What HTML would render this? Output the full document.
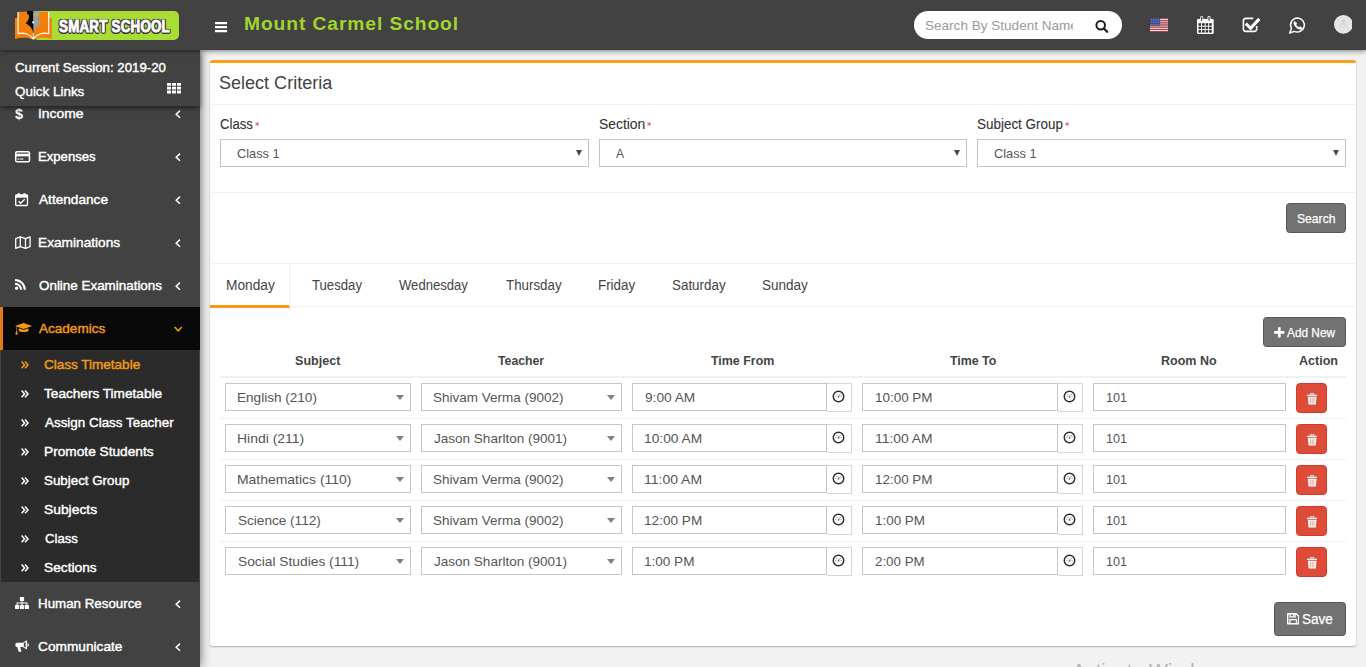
<!DOCTYPE html>
<html lang="en">
<head>
<meta charset="utf-8">
<title>Smart School : Class Timetable</title>
<style>
*{box-sizing:border-box;margin:0;padding:0}
html,body{width:1366px;height:667px;overflow:hidden}
body{font-family:"Liberation Sans",sans-serif;background:#f2f2f2;color:#444;font-size:13px;position:relative}
.a{position:absolute}
.t{position:absolute;white-space:nowrap;line-height:1.2;transform-origin:0 50%;display:block}
.lg{-webkit-text-stroke:.9px #fff;text-shadow:1.3px 0 0 #3d3d3d,-1.3px 0 0 #3d3d3d,0 1.3px 0 #3d3d3d,0 -1.3px 0 #3d3d3d,1px 1px 0 #3d3d3d,-1px -1px 0 #3d3d3d,1px -1px 0 #3d3d3d,-1px 1px 0 #3d3d3d,1.5px .6px 0 #3d3d3d,-1.5px .6px 0 #3d3d3d,.6px 1.5px 0 #3d3d3d,-.6px 1.5px 0 #3d3d3d,.6px -1.5px 0 #3d3d3d,-.6px -1.5px 0 #3d3d3d,1.5px -.6px 0 #3d3d3d,-1.5px -.6px 0 #3d3d3d,0 0 2.500px rgba(40,40,40,.8);letter-spacing:.3px}
/* header */
#hdr{position:absolute;left:0;top:0;width:1366px;height:50px;background:#424242;z-index:30;box-shadow:0 1px 5px rgba(0,0,0,.5)}
#green{position:absolute;left:33.400px;top:10.500px;width:146px;height:29px;background:#aadc36;border-radius:5px}
#srch{position:absolute;left:914px;top:11px;width:208px;height:28px;background:#fff;border-radius:14px}
#phc{position:absolute;left:12px;top:0;width:146.500px;height:28px;overflow:hidden}
/* sidebar */
#side{position:absolute;left:0;top:50px;width:200px;height:617px;background:#424242;z-index:10;box-shadow:1px 0 9px rgba(0,0,0,.5)}
#sess{position:absolute;left:0;top:0;width:200px;height:55.500px;background:#424242;z-index:12;box-shadow:0 2px 5px rgba(0,0,0,.5)}
#act{position:absolute;left:0;top:257px;width:200px;height:43px;background:#090909;border-left:3px solid #e07c12}
#sub{position:absolute;left:1px;top:300px;width:198px;height:231.500px;background:#2b2b2b}
#side svg{position:absolute;overflow:visible}
/* content */
#box{position:absolute;left:210px;top:60px;width:1146px;height:585.500px;background:#fff;border-top:3px solid #f7a01a;border-radius:3px;box-shadow:0 1px 2px rgba(0,0,0,.27)}
.ast{position:absolute;top:58.500px;width:4.300px;height:4.700px}
.sel{position:absolute;top:76px;height:28px;border:1px solid #c4c4c4;background:#fff}
.sel i{position:absolute;right:6px;top:9.900px;width:0;height:0;border-left:3.400px solid transparent;border-right:3.400px solid transparent;border-top:6px solid #4a4a4a}
.hr{position:absolute;left:0;width:1146px;height:1px;background:#f1f1f1}
.btn{position:absolute;background:#727272;border:1px solid #565656;border-radius:3.500px}
.row{position:absolute;left:10px;width:1126px;height:41px;border-bottom:1px solid #f1f1f1}
.in{position:absolute;top:5px;height:28px;border:1px solid #c6c6c6;background:#fff}
.in i{position:absolute;right:6.400px;top:11.100px;width:0;height:0;border-left:4.200px solid transparent;border-right:4.200px solid transparent;border-top:5px solid #808080}
.ad{position:absolute;top:5px;width:25.500px;height:29px;border:1px solid #d2d6de;border-left:0;background:#fff}
.ad svg{position:absolute;left:5.600px;top:6.400px}
.del{position:absolute;left:1076px;top:5px;width:31px;height:30px;background:#dd4b39;border:1px solid #d73925;border-radius:4px}
.del svg{position:absolute;left:9.800px;top:9px}
.row .t{z-index:2}
.row.last{border-bottom:0}
</style>
</head>
<body>
<div id="hdr">
  <div id="green"></div>
  <svg class="a" style="left:14px;top:10px" width="40" height="31" viewBox="0 0 40 31"><g transform="translate(-14,-10)"><path d="M15 18.300L17.600 17.400V11.900L28.800 11.600 33.400 13 38.500 11.600 49.200 11.900V17.400L51.800 18.300V39C47 37.300 38 36.800 33.400 39.800 29 36.800 20 37.300 15 39Z" fill="#f27f0c"/><path d="M18.100 12V33.600C23 32.300 29.500 33.500 33 38.600M48.700 12V33.600C43.800 32.300 37.300 33.500 33.800 38.600" fill="none" stroke="#fff" stroke-width="1.150"/><path d="M27.100 10.900H33.400V32.800C32.600 29 30.500 26 25.700 23.200 28.500 20.500 29.600 17.500 28.800 14.600H27.100Z" fill="#0b0b0b"/><path d="M39.700 10.900H33.400V32.800C34.200 29 36.300 26 41.100 23.200 38.300 20.500 37.200 17.500 38 14.600H39.700Z" fill="#98a4aa"/><path d="M33.400 14.700H39.500" stroke="#b4d84a" stroke-width=".9"/><path d="M33.400 23V32.600" stroke="#3a3a3a" stroke-width=".5"/><path d="M33.400 33V39.600" stroke="#fff" stroke-width=".9"/><circle cx="33.200" cy="22.400" r="1.050" fill="#fff"/></g></svg>
  <span class="t lg" id="logo" style="left:59.32px;top:16.51px;font-size:17px;color:#fff;font-weight:bold;transform:scaleX(0.7845);">SMART SCHOOL</span>
  <span class="t" id="title" style="left:243.97px;top:11.53px;font-size:19.2px;color:#a0d52f;font-weight:bold;transform:scaleX(1.0030);letter-spacing:.9px;">Mount Carmel School</span>
  <svg class="a" style="left:214.500px;top:22.200px" width="12" height="11" viewBox="0 0 12 11"><path d="M0 1.100h12M0 5.100h12M0 9.100h12" stroke="#fff" stroke-width="2.100"/></svg>
  <div id="srch"><div id="phc"><span class="t" id="ph" style="left:-1.00px;top:6.71px;font-size:13.2px;color:#9a9a9a;transform:scaleX(1.0275);">Search By Student Name</span></div>
    <svg class="a" style="left:180px;top:7.500px" width="16" height="16" viewBox="0 0 16 16"><circle cx="6.700" cy="6.300" r="4.300" fill="none" stroke="#1d1d1d" stroke-width="2"/><path d="M9.900 9.500L13.200 12.800" stroke="#1d1d1d" stroke-width="2.300" stroke-linecap="round"/></svg>
  </div>
  <svg class="a" style="left:1149.9px;top:17.9px" width="18.2" height="14.2" viewBox="0 0 18.2 14.2"><rect x="0" y="0.000" width="18.200" height="1.110" fill="#c63a47"/><rect x="0" y="1.092" width="18.200" height="1.110" fill="#f4eaea"/><rect x="0" y="2.184" width="18.200" height="1.110" fill="#c63a47"/><rect x="0" y="3.276" width="18.200" height="1.110" fill="#f4eaea"/><rect x="0" y="4.368" width="18.200" height="1.110" fill="#c63a47"/><rect x="0" y="5.460" width="18.200" height="1.110" fill="#f4eaea"/><rect x="0" y="6.552" width="18.200" height="1.110" fill="#c63a47"/><rect x="0" y="7.644" width="18.200" height="1.110" fill="#f4eaea"/><rect x="0" y="8.736" width="18.200" height="1.110" fill="#c63a47"/><rect x="0" y="9.828" width="18.200" height="1.110" fill="#f4eaea"/><rect x="0" y="10.920" width="18.200" height="1.110" fill="#c63a47"/><rect x="0" y="12.012" width="18.200" height="1.110" fill="#f4eaea"/><rect x="0" y="13.104" width="18.200" height="1.110" fill="#c63a47"/><rect x="0" y="0" width="10.100" height="7.650" fill="#2e4480"/><rect x="0.85" y="0.75" width=".8" height=".8" fill="#c5cbe0"/><rect x="2.75" y="0.75" width=".8" height=".8" fill="#c5cbe0"/><rect x="4.65" y="0.75" width=".8" height=".8" fill="#c5cbe0"/><rect x="6.55" y="0.75" width=".8" height=".8" fill="#c5cbe0"/><rect x="8.45" y="0.75" width=".8" height=".8" fill="#c5cbe0"/><rect x="0.85" y="2.55" width=".8" height=".8" fill="#c5cbe0"/><rect x="2.75" y="2.55" width=".8" height=".8" fill="#c5cbe0"/><rect x="4.65" y="2.55" width=".8" height=".8" fill="#c5cbe0"/><rect x="6.55" y="2.55" width=".8" height=".8" fill="#c5cbe0"/><rect x="8.45" y="2.55" width=".8" height=".8" fill="#c5cbe0"/><rect x="0.85" y="4.35" width=".8" height=".8" fill="#c5cbe0"/><rect x="2.75" y="4.35" width=".8" height=".8" fill="#c5cbe0"/><rect x="4.65" y="4.35" width=".8" height=".8" fill="#c5cbe0"/><rect x="6.55" y="4.35" width=".8" height=".8" fill="#c5cbe0"/><rect x="8.45" y="4.35" width=".8" height=".8" fill="#c5cbe0"/><rect x="0.85" y="6.15" width=".8" height=".8" fill="#c5cbe0"/><rect x="2.75" y="6.15" width=".8" height=".8" fill="#c5cbe0"/><rect x="4.65" y="6.15" width=".8" height=".8" fill="#c5cbe0"/><rect x="6.55" y="6.15" width=".8" height=".8" fill="#c5cbe0"/><rect x="8.45" y="6.15" width=".8" height=".8" fill="#c5cbe0"/></svg><svg class="a" style="left:1196.9px;top:15.9px" width="16.7" height="17.9" viewBox="0 0 16.7 17.9"><rect x="0" y="3" width="16.700" height="14.900" rx="1.200" fill="#fff"/><rect x="3.500" y=".3" width="2.300" height="5" rx="1.150" fill="#424242" stroke="#fff" stroke-width="1"/><rect x="10.900" y=".3" width="2.300" height="5" rx="1.150" fill="#424242" stroke="#fff" stroke-width="1"/><rect x="1.50" y="7.20" width="2.600" height="2.500" fill="#2f2f2f"/><rect x="5.05" y="7.20" width="2.600" height="2.500" fill="#2f2f2f"/><rect x="8.60" y="7.20" width="2.600" height="2.500" fill="#2f2f2f"/><rect x="12.15" y="7.20" width="2.600" height="2.500" fill="#2f2f2f"/><rect x="1.50" y="10.65" width="2.600" height="2.500" fill="#2f2f2f"/><rect x="5.05" y="10.65" width="2.600" height="2.500" fill="#2f2f2f"/><rect x="8.60" y="10.65" width="2.600" height="2.500" fill="#2f2f2f"/><rect x="12.15" y="10.65" width="2.600" height="2.500" fill="#2f2f2f"/><rect x="1.50" y="14.10" width="2.600" height="2.500" fill="#2f2f2f"/><rect x="5.05" y="14.10" width="2.600" height="2.500" fill="#2f2f2f"/><rect x="8.60" y="14.10" width="2.600" height="2.500" fill="#2f2f2f"/><rect x="12.15" y="14.10" width="2.600" height="2.500" fill="#2f2f2f"/></svg><svg class="a" style="left:1242px;top:16px" width="19" height="17" viewBox="0 0 19 17"><g transform="translate(-1242,-16)"><path d="M1253.200 18.400H1245.700A2.300 2.300 0 0 0 1243.400 20.700V29.100A2.300 2.300 0 0 0 1245.700 31.400H1254.400A2.300 2.300 0 0 0 1256.700 29.100V26" fill="none" stroke="#fff" stroke-width="1.600"/><path d="M1245.800 23.700L1250.600 28.300 1259.300 18.900" fill="none" stroke="#fff" stroke-width="3.100"/></g></svg><svg class="a" style="left:1288px;top:16px" width="19" height="18" viewBox="0 0 19 18"><g transform="translate(-1288,-16)"><path d="M1297.700 17.900A7.100 7.100 0 0 0 1291.500 28.500L1289.600 33 1294.200 31.400A7.100 7.100 0 1 0 1297.700 17.900Z" fill="none" stroke="#fff" stroke-width="1.500" stroke-linejoin="round"/><path d="M1294.700 21.400C1293.900 22 1293.600 22.900 1293.900 23.900 1294.700 26.500 1297.500 29 1300.200 29.300 1301.200 29.400 1302 28.900 1302.300 28L1300.200 26.600 1299.200 27.500C1297.800 27 1296.500 25.700 1296.100 24.300L1296.900 23.300Z" fill="#fff" stroke="#fff" stroke-width=".5" stroke-linejoin="round"/></g></svg><svg class="a" style="left:1333.6px;top:15.3px" width="18.8" height="18.8" viewBox="0 0 18.8 18.8"><circle cx="9.400" cy="9.400" r="9.400" fill="#e5e5e5"/><path d="M9.400 4.500a2 1.600 0 0 1 0 3.200 2 1.600 0 0 1 0-3.200zM5.700 9.800c0-2 7.400-2 7.400 0z" fill="#cfcfcf"/><rect x="5" y="11.400" width="8.800" height=".8" fill="#d6d6d6"/></svg>
</div>

<div id="side">
  <div id="sess">
    <span class="t" id="s1" style="left:14.52px;top:9.71px;font-size:13.2px;color:#fff;-webkit-text-stroke:0.4px #fff;transform:scaleX(1.0044);">Current Session: 2019-20</span>
  <span class="t" id="s2" style="left:14.77px;top:33.51px;font-size:13.2px;color:#fff;-webkit-text-stroke:0.4px #fff;transform:scaleX(1.0172);">Quick Links</span>
    <svg style="left:166.700px;top:32.600px" width="14" height="10.400" viewBox="0 0 14 10.400"><path d="M0 0h4v2.800H0zM5 0h4v2.800H5zM10 0h4v2.800h-4zM0 3.800h4v2.800H0zM5 3.800h4v2.800H5zM10 3.800h4v2.800h-4zM0 7.600h4v2.800H0zM5 7.600h4v2.800H5zM10 7.600h4v2.800h-4z" fill="#fff"/></svg>
  </div>
  <div id="act"></div>
  <div id="sub">
    <span class="t" id="u1" style="left:43.40px;top:6.50px;font-size:13px;color:#f39c12;-webkit-text-stroke:0.4px #f39c12;transform:scaleX(1.0397);">Class Timetable</span>
  <span class="t" id="u2" style="left:43.06px;top:35.50px;font-size:13px;color:#fff;-webkit-text-stroke:0.4px #fff;transform:scaleX(1.0474);">Teachers Timetable</span>
  <span class="t" id="u3" style="left:43.55px;top:64.50px;font-size:13px;color:#fff;-webkit-text-stroke:0.4px #fff;transform:scaleX(1.0315);">Assign Class Teacher</span>
  <span class="t" id="u4" style="left:43.32px;top:93.50px;font-size:13px;color:#fff;-webkit-text-stroke:0.4px #fff;transform:scaleX(1.0531);">Promote Students</span>
  <span class="t" id="u5" style="left:42.98px;top:122.50px;font-size:13px;color:#fff;-webkit-text-stroke:0.4px #fff;transform:scaleX(1.0265);">Subject Group</span>
  <span class="t" id="u6" style="left:42.89px;top:151.50px;font-size:13px;color:#fff;-webkit-text-stroke:0.4px #fff;transform:scaleX(1.0643);">Subjects</span>
  <span class="t" id="u7" style="left:43.56px;top:180.50px;font-size:13px;color:#fff;-webkit-text-stroke:0.4px #fff;transform:scaleX(1.0099);">Class</span>
  <span class="t" id="u8" style="left:42.89px;top:209.50px;font-size:13px;color:#fff;-webkit-text-stroke:0.4px #fff;transform:scaleX(1.0552);">Sections</span>
    <svg style="left:19.600px;top:10.9px" width="8" height="7.800" viewBox="0 0 8 7.800"><path d="M.6 .5L3.600 3.900 .6 7.300M4 .5L7 3.900 4 7.300" fill="none" stroke="#f39c12" stroke-width="1.500"/></svg>
    <svg style="left:19.600px;top:39.9px" width="8" height="7.800" viewBox="0 0 8 7.800"><path d="M.6 .5L3.600 3.900 .6 7.300M4 .5L7 3.900 4 7.300" fill="none" stroke="#fff" stroke-width="1.500"/></svg>
    <svg style="left:19.600px;top:68.9px" width="8" height="7.800" viewBox="0 0 8 7.800"><path d="M.6 .5L3.600 3.900 .6 7.300M4 .5L7 3.900 4 7.300" fill="none" stroke="#fff" stroke-width="1.500"/></svg>
    <svg style="left:19.600px;top:97.9px" width="8" height="7.800" viewBox="0 0 8 7.800"><path d="M.6 .5L3.600 3.900 .6 7.300M4 .5L7 3.900 4 7.300" fill="none" stroke="#fff" stroke-width="1.500"/></svg>
    <svg style="left:19.600px;top:126.9px" width="8" height="7.800" viewBox="0 0 8 7.800"><path d="M.6 .5L3.600 3.900 .6 7.300M4 .5L7 3.900 4 7.300" fill="none" stroke="#fff" stroke-width="1.500"/></svg>
    <svg style="left:19.600px;top:155.9px" width="8" height="7.800" viewBox="0 0 8 7.800"><path d="M.6 .5L3.600 3.900 .6 7.300M4 .5L7 3.900 4 7.300" fill="none" stroke="#fff" stroke-width="1.500"/></svg>
    <svg style="left:19.600px;top:184.9px" width="8" height="7.800" viewBox="0 0 8 7.800"><path d="M.6 .5L3.600 3.900 .6 7.300M4 .5L7 3.900 4 7.300" fill="none" stroke="#fff" stroke-width="1.500"/></svg>
    <svg style="left:19.600px;top:213.9px" width="8" height="7.800" viewBox="0 0 8 7.800"><path d="M.6 .5L3.600 3.900 .6 7.300M4 .5L7 3.900 4 7.300" fill="none" stroke="#fff" stroke-width="1.500"/></svg>
    
  </div>
  <span class="t" id="m1" style="left:37.95px;top:56.00px;font-size:13px;color:#fff;-webkit-text-stroke:0.4px #fff;transform:scaleX(1.0678);">Income</span>
  <span class="t" id="m2" style="left:37.79px;top:99.00px;font-size:13px;color:#fff;-webkit-text-stroke:0.4px #fff;transform:scaleX(1.0091);">Expenses</span>
  <span class="t" id="m3" style="left:38.55px;top:142.00px;font-size:13px;color:#fff;-webkit-text-stroke:0.4px #fff;transform:scaleX(1.0491);">Attendance</span>
  <span class="t" id="m4" style="left:38.30px;top:185.00px;font-size:13px;color:#fff;-webkit-text-stroke:0.4px #fff;transform:scaleX(1.0532);">Examinations</span>
  <span class="t" id="m5" style="left:38.73px;top:228.00px;font-size:13px;color:#fff;-webkit-text-stroke:0.4px #fff;transform:scaleX(1.0315);">Online Examinations</span>
  <span class="t" id="m6" style="left:38.90px;top:271.00px;font-size:13px;color:#f39c12;-webkit-text-stroke:0.4px #f39c12;transform:scaleX(1.0413);">Academics</span>
  <span class="t" id="m7" style="left:38.45px;top:545.50px;font-size:13px;color:#fff;-webkit-text-stroke:0.4px #fff;transform:scaleX(1.0258);">Human Resource</span>
  <span class="t" id="m8" style="left:38.10px;top:588.50px;font-size:13px;color:#fff;-webkit-text-stroke:0.4px #fff;transform:scaleX(1.0533);">Communicate</span>
  <span class="t" style="left:14.600px;top:55.300px;font-size:15px;font-weight:bold;color:#fff;transform:scaleX(.96)">$</span>
  <svg style="left:14.5px;top:100.5px" width="15.2" height="11.5" viewBox="0 0 15.2 11.5"><rect x=".75" y=".75" width="13.700" height="10" rx="1.300" fill="none" stroke="#fff" stroke-width="1.500"/><rect x=".5" y="2.700" width="14" height="2.700" fill="#fff"/><rect x="2.500" y="7.500" width="2" height="1.100" fill="#fff"/><rect x="5.300" y="7.500" width="3" height="1.100" fill="#fff"/></svg>
  <svg style="left:14.5px;top:142.7px" width="13.2" height="13.2" viewBox="0 0 13.2 13.2"><rect x=".7" y="2" width="11.800" height="10.500" rx=".8" fill="none" stroke="#fff" stroke-width="1.300"/><rect x=".7" y="2" width="11.800" height="2.700" fill="#fff"/><rect x="2.700" y="0" width="2.200" height="3.200" rx=".9" fill="#fff"/><rect x="8.300" y="0" width="2.200" height="3.200" rx=".9" fill="#fff"/><path d="M3.600 8.300l2 2L9.700 6.300" fill="none" stroke="#fff" stroke-width="1.300"/></svg>
  <svg style="left:14.5px;top:185.8px" width="15.8" height="13.2" viewBox="0 0 15.8 13.2"><path d="M.7 2.600L5.300.8 10.500 2.600 15.100.8V10.600L10.500 12.400 5.300 10.600.7 12.400Z" fill="none" stroke="#fff" stroke-width="1.300" stroke-linejoin="round"/><path d="M5.300 .8V10.600M10.500 2.600V12.400" stroke="#fff" stroke-width="1.300"/></svg>
  <svg style="left:14.5px;top:229.2px" width="11.3" height="10.8" viewBox="0 0 11.3 10.8"><circle cx="1.600" cy="9.200" r="1.600" fill="#fff"/><path d="M0 4.700A6.100 6.100 0 0 1 6.100 10.800M0 1A9.800 9.800 0 0 1 9.800 10.800" fill="none" stroke="#fff" stroke-width="2.100"/></svg>
  <svg style="left:15px;top:272.7px" width="17.2" height="11.5" viewBox="0 0 17.2 11.5"><path d="M8.600 0L17.200 3 8.600 6 0 3Z" fill="#f39c12"/><path d="M3.800 5.200V8C5.300 9.500 11.900 9.500 13.400 8V5.200L8.600 7Z" fill="#f39c12"/><path d="M1.500 3.500V8.200L.6 11.300H2.600L1.900 8.200" fill="#f39c12" stroke="#f39c12" stroke-width=".5"/></svg>
  <svg style="left:14.5px;top:547.2px" width="14" height="12" viewBox="0 0 14 12"><rect x="4.900" y="0" width="4.200" height="4" rx=".4" fill="#fff"/><rect x="0" y="8" width="4.200" height="4" rx=".4" fill="#fff"/><rect x="4.900" y="8" width="4.200" height="4" rx=".4" fill="#fff"/><rect x="9.800" y="8" width="4.200" height="4" rx=".4" fill="#fff"/><path d="M7 4V8M2.100 8V6H11.900V8" fill="none" stroke="#fff" stroke-width="1.100"/></svg>
  <svg style="left:14.6px;top:590.4px" width="14" height="12" viewBox="0 0 14 12"><path d="M12 .3V9.500L7.600 7.100H2A1.600 1.600 0 0 1 .4 5.500V4.300A1.600 1.600 0 0 1 2 2.700H7.600Z" fill="#fff"/><path d="M2.400 7.100L3.600 11.700H6.400L5.300 7.100Z" fill="#fff"/><path d="M12.400 3.500A1.500 1.500 0 0 1 12.400 6.300" fill="none" stroke="#fff" stroke-width="1.100"/><path d="M8.800 3L10.600 2V7.800L8.800 6.800Z" fill="#424242"/></svg>
  <svg style="left:175px;top:59.7px" width="6" height="8.4" viewBox="0 0 6 8.4"><path d="M5 0.600L1.200 4.200 5 7.800" fill="none" stroke="#fff" stroke-width="1.500"/></svg>
  <svg style="left:175px;top:102.7px" width="6" height="8.4" viewBox="0 0 6 8.4"><path d="M5 0.600L1.200 4.200 5 7.800" fill="none" stroke="#fff" stroke-width="1.500"/></svg>
  <svg style="left:175px;top:145.7px" width="6" height="8.4" viewBox="0 0 6 8.4"><path d="M5 0.600L1.200 4.200 5 7.800" fill="none" stroke="#fff" stroke-width="1.500"/></svg>
  <svg style="left:175px;top:188.7px" width="6" height="8.4" viewBox="0 0 6 8.4"><path d="M5 0.600L1.200 4.200 5 7.800" fill="none" stroke="#fff" stroke-width="1.500"/></svg>
  <svg style="left:175px;top:231.7px" width="6" height="8.4" viewBox="0 0 6 8.4"><path d="M5 0.600L1.200 4.200 5 7.800" fill="none" stroke="#fff" stroke-width="1.500"/></svg>
  <svg style="left:175px;top:549.7px" width="6" height="8.4" viewBox="0 0 6 8.4"><path d="M5 0.600L1.200 4.200 5 7.800" fill="none" stroke="#fff" stroke-width="1.500"/></svg>
  <svg style="left:175px;top:592.7px" width="6" height="8.4" viewBox="0 0 6 8.4"><path d="M5 0.600L1.200 4.200 5 7.800" fill="none" stroke="#fff" stroke-width="1.500"/></svg>
  <svg style="left:174px;top:275.6px" width="8.4" height="6" viewBox="0 0 8.4 6"><path d="M.6 1L4.200 4.800 7.800 1" fill="none" stroke="#f39c12" stroke-width="1.500"/></svg>
  
</div>

<div id="box">
  <div class="hr" style="top:41px"></div>
  <svg class="ast" style="left:45.300px" viewBox="0 0 5 6"><path d="M2.500 0v5.400M0.200 1.400l4.600 2.600M4.800 1.400L0.200 4" stroke="#ee3b4f" stroke-width=".9"/></svg>
  <svg class="ast" style="left:436.900px" viewBox="0 0 5 6"><path d="M2.500 0v5.400M0.200 1.400l4.600 2.600M4.800 1.400L0.200 4" stroke="#ee3b4f" stroke-width=".9"/></svg>
  <svg class="ast" style="left:854.800px" viewBox="0 0 5 6"><path d="M2.500 0v5.400M0.200 1.400l4.600 2.600M4.800 1.400L0.200 4" stroke="#ee3b4f" stroke-width=".9"/></svg>
  <div class="sel" style="left:10px;width:369px"><i></i></div>
  <div class="sel" style="left:389px;width:368px"><i></i></div>
  <div class="sel" style="left:767px;width:369px"><i></i></div>
  <div class="hr" style="top:129px"></div>
  <div class="btn" style="left:1076px;top:140px;width:60px;height:30px"></div>
  <div class="hr" style="top:200px"></div>
  <div class="hr" style="top:243px"></div>
  <div class="a" style="left:0;top:201px;width:80px;height:44px;border-right:1px solid #f1f1f1;border-bottom:3px solid #f39c12"></div>
  <div class="btn" style="left:1053px;top:254px;width:83px;height:30px"><svg class="a" style="left:10px;top:9.300px" width="11" height="11" viewBox="0 0 11 11"><path d="M5.300 0.200v10.200M0.200 5.300h10.200" stroke="#fff" stroke-width="2.700"/></svg></div>
  <div class="a" style="left:10px;top:313px;width:1126px;height:2px;background:#f1f1f1"></div>
  <div class="row" style="top:315px"><div class="in" style="left:5px;width:186px"><i></i></div><div class="in" style="left:201px;width:201px"><i></i></div><div class="in" style="left:412px;width:195px"></div><div class="ad" style="left:606.500px"><svg width="13" height="13" viewBox="0 0 13 13"><circle cx="6.500" cy="6.500" r="5.250" fill="none" stroke="#2b2b2b" stroke-width="1.450"/><circle cx="6.500" cy="7" r=".8" fill="#555"/><path d="M6.500 7L7.200 5.100" stroke="#555" stroke-width=".8"/><circle cx="3.900" cy="6.300" r=".5" fill="#666"/><circle cx="4.900" cy="4.500" r=".5" fill="#666"/><circle cx="8.100" cy="4.500" r=".5" fill="#666"/><circle cx="9.100" cy="6.300" r=".5" fill="#666"/></svg></div><div class="in" style="left:642px;width:196px"></div><div class="ad" style="left:837.600px"><svg width="13" height="13" viewBox="0 0 13 13"><circle cx="6.500" cy="6.500" r="5.250" fill="none" stroke="#2b2b2b" stroke-width="1.450"/><circle cx="6.500" cy="7" r=".8" fill="#555"/><path d="M6.500 7L7.200 5.100" stroke="#555" stroke-width=".8"/><circle cx="3.900" cy="6.300" r=".5" fill="#666"/><circle cx="4.900" cy="4.500" r=".5" fill="#666"/><circle cx="8.100" cy="4.500" r=".5" fill="#666"/><circle cx="9.100" cy="6.300" r=".5" fill="#666"/></svg></div><div class="in" style="left:873px;width:193px"></div><div class="del"><svg width="10.400" height="11.600" viewBox="0 0 10.400 11.600"><path d="M0 1.700H10.400V3H0zM3.300 0H7.100V1.700H3.300zM.9 3.700H9.500L8.900 11A.7.700 0 0 1 8.200 11.600H2.200A.7.700 0 0 1 1.500 11Z" fill="#fff"/><path d="M3.400 4.700V10.300M5.200 4.700V10.300M7 4.700V10.300" stroke="#e58a7e" stroke-width=".8"/><rect x="4.100" y=".7" width="2.200" height="1" fill="#dd4b39"/></svg></div><span class="t" id="r0a" style="left:17.44px;top:11.50px;font-size:13px;color:#555;transform:scaleX(1.0431);">English (210)</span><span class="t" id="r0b" style="left:213.09px;top:11.50px;font-size:13px;color:#555;transform:scaleX(1.0373);">Shivam Verma (9002)</span><span class="t" id="r0c" style="left:425.09px;top:11.50px;font-size:13px;color:#555;transform:scaleX(1.0516);">9:00 AM</span><span class="t" id="r0d" style="left:655.06px;top:11.50px;font-size:13px;color:#555;transform:scaleX(1.0330);">10:00 PM</span><span class="t" id="r0e" style="left:886.39px;top:11.50px;font-size:13px;color:#555;transform:scaleX(0.9716);">101</span></div>
  <div class="row" style="top:356px"><div class="in" style="left:5px;width:186px"><i></i></div><div class="in" style="left:201px;width:201px"><i></i></div><div class="in" style="left:412px;width:195px"></div><div class="ad" style="left:606.500px"><svg width="13" height="13" viewBox="0 0 13 13"><circle cx="6.500" cy="6.500" r="5.250" fill="none" stroke="#2b2b2b" stroke-width="1.450"/><circle cx="6.500" cy="7" r=".8" fill="#555"/><path d="M6.500 7L7.200 5.100" stroke="#555" stroke-width=".8"/><circle cx="3.900" cy="6.300" r=".5" fill="#666"/><circle cx="4.900" cy="4.500" r=".5" fill="#666"/><circle cx="8.100" cy="4.500" r=".5" fill="#666"/><circle cx="9.100" cy="6.300" r=".5" fill="#666"/></svg></div><div class="in" style="left:642px;width:196px"></div><div class="ad" style="left:837.600px"><svg width="13" height="13" viewBox="0 0 13 13"><circle cx="6.500" cy="6.500" r="5.250" fill="none" stroke="#2b2b2b" stroke-width="1.450"/><circle cx="6.500" cy="7" r=".8" fill="#555"/><path d="M6.500 7L7.200 5.100" stroke="#555" stroke-width=".8"/><circle cx="3.900" cy="6.300" r=".5" fill="#666"/><circle cx="4.900" cy="4.500" r=".5" fill="#666"/><circle cx="8.100" cy="4.500" r=".5" fill="#666"/><circle cx="9.100" cy="6.300" r=".5" fill="#666"/></svg></div><div class="in" style="left:873px;width:193px"></div><div class="del"><svg width="10.400" height="11.600" viewBox="0 0 10.400 11.600"><path d="M0 1.700H10.400V3H0zM3.300 0H7.100V1.700H3.300zM.9 3.700H9.500L8.900 11A.7.700 0 0 1 8.200 11.600H2.200A.7.700 0 0 1 1.500 11Z" fill="#fff"/><path d="M3.400 4.700V10.300M5.200 4.700V10.300M7 4.700V10.300" stroke="#e58a7e" stroke-width=".8"/><rect x="4.100" y=".7" width="2.200" height="1" fill="#dd4b39"/></svg></div><span class="t" id="r1a" style="left:17.44px;top:11.50px;font-size:13px;color:#555;transform:scaleX(1.0732);">Hindi (211)</span><span class="t" id="r1b" style="left:214.18px;top:11.50px;font-size:13px;color:#555;transform:scaleX(1.0404);">Jason Sharlton (9001)</span><span class="t" id="r1c" style="left:424.04px;top:11.50px;font-size:13px;color:#555;transform:scaleX(1.0588);">10:00 AM</span><span class="t" id="r1d" style="left:655.06px;top:11.50px;font-size:13px;color:#555;transform:scaleX(1.0658);">11:00 AM</span><span class="t" id="r1e" style="left:886.39px;top:11.50px;font-size:13px;color:#555;transform:scaleX(0.9716);">101</span></div>
  <div class="row" style="top:397px"><div class="in" style="left:5px;width:186px"><i></i></div><div class="in" style="left:201px;width:201px"><i></i></div><div class="in" style="left:412px;width:195px"></div><div class="ad" style="left:606.500px"><svg width="13" height="13" viewBox="0 0 13 13"><circle cx="6.500" cy="6.500" r="5.250" fill="none" stroke="#2b2b2b" stroke-width="1.450"/><circle cx="6.500" cy="7" r=".8" fill="#555"/><path d="M6.500 7L7.200 5.100" stroke="#555" stroke-width=".8"/><circle cx="3.900" cy="6.300" r=".5" fill="#666"/><circle cx="4.900" cy="4.500" r=".5" fill="#666"/><circle cx="8.100" cy="4.500" r=".5" fill="#666"/><circle cx="9.100" cy="6.300" r=".5" fill="#666"/></svg></div><div class="in" style="left:642px;width:196px"></div><div class="ad" style="left:837.600px"><svg width="13" height="13" viewBox="0 0 13 13"><circle cx="6.500" cy="6.500" r="5.250" fill="none" stroke="#2b2b2b" stroke-width="1.450"/><circle cx="6.500" cy="7" r=".8" fill="#555"/><path d="M6.500 7L7.200 5.100" stroke="#555" stroke-width=".8"/><circle cx="3.900" cy="6.300" r=".5" fill="#666"/><circle cx="4.900" cy="4.500" r=".5" fill="#666"/><circle cx="8.100" cy="4.500" r=".5" fill="#666"/><circle cx="9.100" cy="6.300" r=".5" fill="#666"/></svg></div><div class="in" style="left:873px;width:193px"></div><div class="del"><svg width="10.400" height="11.600" viewBox="0 0 10.400 11.600"><path d="M0 1.700H10.400V3H0zM3.300 0H7.100V1.700H3.300zM.9 3.700H9.500L8.900 11A.7.700 0 0 1 8.200 11.600H2.200A.7.700 0 0 1 1.500 11Z" fill="#fff"/><path d="M3.400 4.700V10.300M5.200 4.700V10.300M7 4.700V10.300" stroke="#e58a7e" stroke-width=".8"/><rect x="4.100" y=".7" width="2.200" height="1" fill="#dd4b39"/></svg></div><span class="t" id="r2a" style="left:17.44px;top:11.50px;font-size:13px;color:#555;transform:scaleX(1.0723);">Mathematics (110)</span><span class="t" id="r2b" style="left:213.09px;top:11.50px;font-size:13px;color:#555;transform:scaleX(1.0373);">Shivam Verma (9002)</span><span class="t" id="r2c" style="left:424.04px;top:11.50px;font-size:13px;color:#555;transform:scaleX(1.0769);">11:00 AM</span><span class="t" id="r2d" style="left:655.06px;top:11.50px;font-size:13px;color:#555;transform:scaleX(1.0330);">12:00 PM</span><span class="t" id="r2e" style="left:886.39px;top:11.50px;font-size:13px;color:#555;transform:scaleX(0.9716);">101</span></div>
  <div class="row" style="top:438px"><div class="in" style="left:5px;width:186px"><i></i></div><div class="in" style="left:201px;width:201px"><i></i></div><div class="in" style="left:412px;width:195px"></div><div class="ad" style="left:606.500px"><svg width="13" height="13" viewBox="0 0 13 13"><circle cx="6.500" cy="6.500" r="5.250" fill="none" stroke="#2b2b2b" stroke-width="1.450"/><circle cx="6.500" cy="7" r=".8" fill="#555"/><path d="M6.500 7L7.200 5.100" stroke="#555" stroke-width=".8"/><circle cx="3.900" cy="6.300" r=".5" fill="#666"/><circle cx="4.900" cy="4.500" r=".5" fill="#666"/><circle cx="8.100" cy="4.500" r=".5" fill="#666"/><circle cx="9.100" cy="6.300" r=".5" fill="#666"/></svg></div><div class="in" style="left:642px;width:196px"></div><div class="ad" style="left:837.600px"><svg width="13" height="13" viewBox="0 0 13 13"><circle cx="6.500" cy="6.500" r="5.250" fill="none" stroke="#2b2b2b" stroke-width="1.450"/><circle cx="6.500" cy="7" r=".8" fill="#555"/><path d="M6.500 7L7.200 5.100" stroke="#555" stroke-width=".8"/><circle cx="3.900" cy="6.300" r=".5" fill="#666"/><circle cx="4.900" cy="4.500" r=".5" fill="#666"/><circle cx="8.100" cy="4.500" r=".5" fill="#666"/><circle cx="9.100" cy="6.300" r=".5" fill="#666"/></svg></div><div class="in" style="left:873px;width:193px"></div><div class="del"><svg width="10.400" height="11.600" viewBox="0 0 10.400 11.600"><path d="M0 1.700H10.400V3H0zM3.300 0H7.100V1.700H3.300zM.9 3.700H9.500L8.900 11A.7.700 0 0 1 8.200 11.600H2.200A.7.700 0 0 1 1.500 11Z" fill="#fff"/><path d="M3.400 4.700V10.300M5.200 4.700V10.300M7 4.700V10.300" stroke="#e58a7e" stroke-width=".8"/><rect x="4.100" y=".7" width="2.200" height="1" fill="#dd4b39"/></svg></div><span class="t" id="r3a" style="left:17.57px;top:11.50px;font-size:13px;color:#555;transform:scaleX(1.0449);">Science (112)</span><span class="t" id="r3b" style="left:213.09px;top:11.50px;font-size:13px;color:#555;transform:scaleX(1.0373);">Shivam Verma (9002)</span><span class="t" id="r3c" style="left:424.04px;top:11.50px;font-size:13px;color:#555;transform:scaleX(1.0463);">12:00 PM</span><span class="t" id="r3d" style="left:655.06px;top:11.50px;font-size:13px;color:#555;transform:scaleX(1.0331);">1:00 PM</span><span class="t" id="r3e" style="left:886.39px;top:11.50px;font-size:13px;color:#555;transform:scaleX(0.9716);">101</span></div>
  <div class="row last" style="top:479px"><div class="in" style="left:5px;width:186px"><i></i></div><div class="in" style="left:201px;width:201px"><i></i></div><div class="in" style="left:412px;width:195px"></div><div class="ad" style="left:606.500px"><svg width="13" height="13" viewBox="0 0 13 13"><circle cx="6.500" cy="6.500" r="5.250" fill="none" stroke="#2b2b2b" stroke-width="1.450"/><circle cx="6.500" cy="7" r=".8" fill="#555"/><path d="M6.500 7L7.200 5.100" stroke="#555" stroke-width=".8"/><circle cx="3.900" cy="6.300" r=".5" fill="#666"/><circle cx="4.900" cy="4.500" r=".5" fill="#666"/><circle cx="8.100" cy="4.500" r=".5" fill="#666"/><circle cx="9.100" cy="6.300" r=".5" fill="#666"/></svg></div><div class="in" style="left:642px;width:196px"></div><div class="ad" style="left:837.600px"><svg width="13" height="13" viewBox="0 0 13 13"><circle cx="6.500" cy="6.500" r="5.250" fill="none" stroke="#2b2b2b" stroke-width="1.450"/><circle cx="6.500" cy="7" r=".8" fill="#555"/><path d="M6.500 7L7.200 5.100" stroke="#555" stroke-width=".8"/><circle cx="3.900" cy="6.300" r=".5" fill="#666"/><circle cx="4.900" cy="4.500" r=".5" fill="#666"/><circle cx="8.100" cy="4.500" r=".5" fill="#666"/><circle cx="9.100" cy="6.300" r=".5" fill="#666"/></svg></div><div class="in" style="left:873px;width:193px"></div><div class="del"><svg width="10.400" height="11.600" viewBox="0 0 10.400 11.600"><path d="M0 1.700H10.400V3H0zM3.300 0H7.100V1.700H3.300zM.9 3.700H9.500L8.900 11A.7.700 0 0 1 8.200 11.600H2.200A.7.700 0 0 1 1.500 11Z" fill="#fff"/><path d="M3.400 4.700V10.300M5.200 4.700V10.300M7 4.700V10.300" stroke="#e58a7e" stroke-width=".8"/><rect x="4.100" y=".7" width="2.200" height="1" fill="#dd4b39"/></svg></div><span class="t" id="r4a" style="left:17.57px;top:11.50px;font-size:13px;color:#555;transform:scaleX(1.0594);">Social Studies (111)</span><span class="t" id="r4b" style="left:214.18px;top:11.50px;font-size:13px;color:#555;transform:scaleX(1.0404);">Jason Sharlton (9001)</span><span class="t" id="r4c" style="left:424.04px;top:11.50px;font-size:13px;color:#555;transform:scaleX(1.0416);">1:00 PM</span><span class="t" id="r4d" style="left:654.85px;top:11.50px;font-size:13px;color:#555;transform:scaleX(1.0249);">2:00 PM</span><span class="t" id="r4e" style="left:886.39px;top:11.50px;font-size:13px;color:#555;transform:scaleX(0.9716);">101</span></div>

  <div class="btn" style="left:1064px;top:539px;width:72px;height:33.500px"><svg class="a" style="left:11.600px;top:10.400px" width="12.400" height="11.400" viewBox="0 0 12.400 11.400"><path d="M.7 .7H9.200L11.700 3.200V10.700H.7Z" fill="none" stroke="#fff" stroke-width="1.400" stroke-linejoin="round"/><path d="M3 .7V3.800H8.200V.7" fill="none" stroke="#fff" stroke-width="1.200"/><path d="M2.900 10.700V6.600H9.500V10.700" fill="none" stroke="#fff" stroke-width="1.200"/><rect x="6" y="1" width="1.300" height="2.200" fill="#fff"/></svg></div>
  <span class="t" id="h1" style="left:9.43px;top:10.24px;font-size:17.6px;color:#444;transform:scaleX(1.0246);">Select Criteria</span>
  <span class="t" id="l1" style="left:10.04px;top:52.75px;font-size:14px;color:#333;-webkit-text-stroke:0.1px #333;transform:scaleX(0.9382);">Class</span>
  <span class="t" id="l2" style="left:389.14px;top:52.75px;font-size:14px;color:#333;-webkit-text-stroke:0.1px #333;transform:scaleX(0.9897);">Section</span>
  <span class="t" id="l3" style="left:766.89px;top:52.75px;font-size:14px;color:#333;-webkit-text-stroke:0.1px #333;transform:scaleX(0.9604);">Subject Group</span>
  <span class="t" id="v1" style="left:26.76px;top:82.50px;font-size:13px;color:#555;transform:scaleX(0.9825);">Class 1</span>
  <span class="t" id="v2" style="left:405.74px;top:82.50px;font-size:13px;color:#555;transform:scaleX(0.9312);">A</span>
  <span class="t" id="v3" style="left:783.85px;top:82.50px;font-size:13px;color:#555;transform:scaleX(0.9826);">Class 1</span>
  <span class="t" id="b1" style="left:1086.85px;top:149.27px;font-size:12.6px;color:#fff;-webkit-text-stroke:0.25px #fff;transform:scaleX(0.9642);">Search</span>
  <span class="t" id="d1" style="left:15.79px;top:214.45px;font-size:14px;color:#444;transform:scaleX(0.9800);">Monday</span>
  <span class="t" id="d2" style="left:101.54px;top:214.45px;font-size:14px;color:#444;transform:scaleX(0.9396);">Tuesday</span>
  <span class="t" id="d3" style="left:189.17px;top:214.45px;font-size:14px;color:#444;transform:scaleX(0.9343);">Wednesday</span>
  <span class="t" id="d4" style="left:295.52px;top:214.45px;font-size:14px;color:#444;transform:scaleX(0.9527);">Thursday</span>
  <span class="t" id="d5" style="left:387.94px;top:214.45px;font-size:14px;color:#444;transform:scaleX(0.9547);">Friday</span>
  <span class="t" id="d6" style="left:462.30px;top:214.45px;font-size:14px;color:#444;transform:scaleX(0.9572);">Saturday</span>
  <span class="t" id="d7" style="left:552.05px;top:214.45px;font-size:14px;color:#444;transform:scaleX(0.9653);">Sunday</span>
  <span class="t" id="b2" style="left:1077.00px;top:263.27px;font-size:12.6px;color:#fff;-webkit-text-stroke:0.25px #fff;transform:scaleX(0.9397);">Add New</span>
  <span class="t" id="c1" style="left:84.65px;top:290.20px;font-size:13px;color:#444;font-weight:bold;transform:scaleX(0.9662);">Subject</span>
  <span class="t" id="c2" style="left:288.06px;top:290.20px;font-size:13px;color:#444;font-weight:bold;transform:scaleX(0.9431);">Teacher</span>
  <span class="t" id="c3" style="left:500.90px;top:290.20px;font-size:13px;color:#444;font-weight:bold;transform:scaleX(0.9561);">Time From</span>
  <span class="t" id="c4" style="left:740.30px;top:290.20px;font-size:13px;color:#444;font-weight:bold;transform:scaleX(0.9521);">Time To</span>
  <span class="t" id="c5" style="left:951.23px;top:290.20px;font-size:13px;color:#444;font-weight:bold;transform:scaleX(0.9615);">Room No</span>
  <span class="t" id="c6" style="left:1089.26px;top:290.20px;font-size:13px;color:#444;font-weight:bold;transform:scaleX(0.9647);">Action</span>
  <span class="t" id="b3" style="left:1091.99px;top:547.10px;font-size:15px;color:#fff;-webkit-text-stroke:0.25px #fff;transform:scaleX(0.9038);">Save</span>
</div>
<span class="t" style="left:1072.300px;top:659.400px;font-size:20px;color:#b2b2b2">Activate Windows</span>
</body>
</html>
